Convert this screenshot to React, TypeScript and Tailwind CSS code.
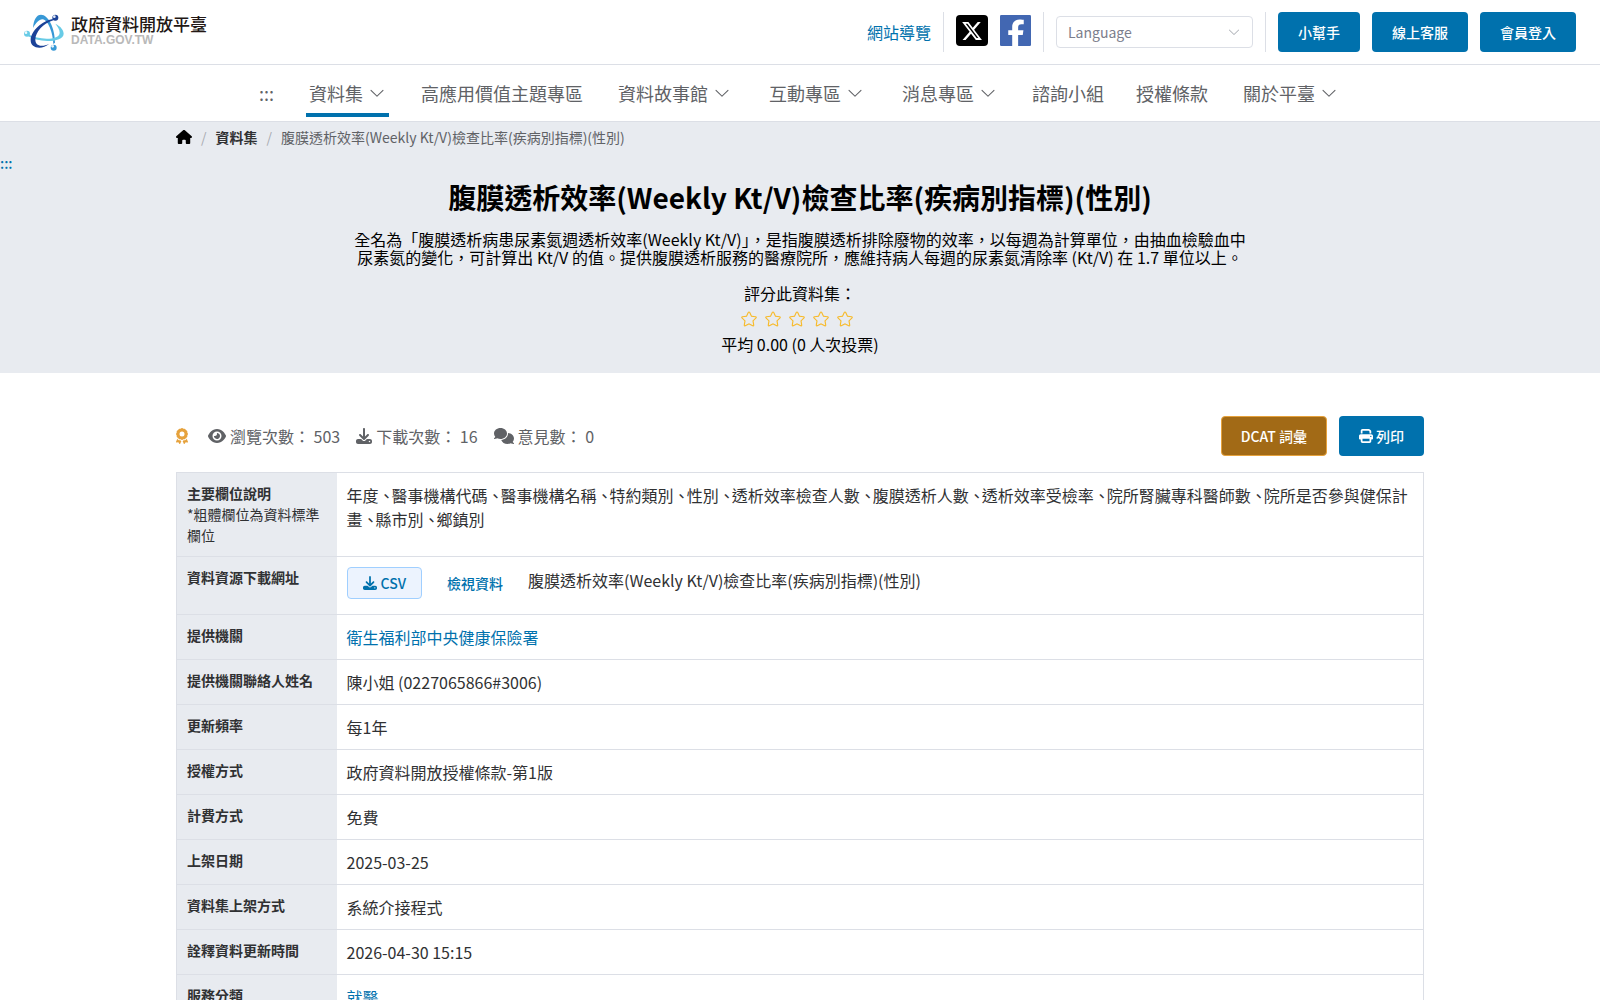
import React from "react";
import { FaAward, FaComments, FaDownload, FaEye, FaHouse, FaPrint, FaXTwitter } from "react-icons/fa6";

const DATASET = "腹膜透析效率(Weekly Kt/V)檢查比率(疾病別指標)(性別)";

const NAV = [
  { label: "資料集", menu: true, active: true },
  { label: "高應用價值主題專區" },
  { label: "資料故事館", menu: true },
  { label: "互動專區", menu: true },
  { label: "消息專區", menu: true },
  { label: "諮詢小組" },
  { label: "授權條款" },
  { label: "關於平臺", menu: true },
];

const FIELDS = [
  "年度",
  "醫事機構代碼",
  "醫事機構名稱",
  "特約類別",
  "性別",
  "透析效率檢查人數",
  "腹膜透析人數",
  "透析效率受檢率",
  "院所腎臟專科醫師數",
  "院所是否參與健保計畫",
  "縣市別",
  "鄉鎮別",
];

const ROWS = [
  { label: "提供機關", value: "衛生福利部中央健康保險署", link: true },
  { label: "提供機關聯絡人姓名", value: "陳小姐 (0227065866#3006)" },
  { label: "更新頻率", value: "每1年" },
  { label: "授權方式", value: "政府資料開放授權條款-第1版" },
  { label: "計費方式", value: "免費" },
  { label: "上架日期", value: "2025-03-25" },
  { label: "資料集上架方式", value: "系統介接程式" },
  { label: "詮釋資料更新時間", value: "2026-04-30 15:15" },
  { label: "服務分類", value: "就醫", link: true },
];

function Chevron({ className }: { className?: string }) {
  return (
    <svg viewBox="0 0 1024 1024" fill="currentColor" aria-hidden="true" className={className}>
      <path d="M831.872 340.864 512 652.672 192.128 340.864a30.592 30.592 0 0 0-42.752 0 29.12 29.12 0 0 0 0 41.6L489.664 714.24a32 32 0 0 0 44.672 0l340.288-331.712a29.12 29.12 0 0 0 0-41.728 30.592 30.592 0 0 0-42.752 0z" />
    </svg>
  );
}

function Star() {
  return (
    <svg viewBox="0 0 1024 1024" fill="currentColor" aria-hidden="true" className="size-[18px]">
      <path d="M512 747.84l228.16 119.936a6.4 6.4 0 0 0 9.28-6.72l-43.52-254.08 184.512-179.904a6.4 6.4 0 0 0-3.52-10.88l-255.104-37.12L517.76 147.904a6.4 6.4 0 0 0-11.52 0L392.192 379.072l-255.104 37.12a6.4 6.4 0 0 0-3.52 10.88L318.08 606.976l-43.584 254.08a6.4 6.4 0 0 0 9.28 6.72L512 747.84zM313.6 924.48a70.4 70.4 0 0 1-102.144-74.24l37.888-220.928L88.96 472.96A70.4 70.4 0 0 1 128 352.896l221.76-32.256 99.2-200.96a70.4 70.4 0 0 1 126.208 0l99.2 200.96 221.824 32.256a70.4 70.4 0 0 1 39.04 120.064L774.72 629.376l37.888 220.928a70.4 70.4 0 0 1-102.144 74.24L512 820.096l-198.4 104.32z" />
    </svg>
  );
}

function Logo() {
  return (
    <svg viewBox="0 0 120 111" aria-hidden="true" className="h-[37px] w-10">
      <path d="M27 42C29 16 38 2 51 2c21 0 42 38 42 84l-5 4C87 56 72 18 56 16 46 15 36 26 27 42Z" fill="#3798d6" />
      <path d="M94 29c16 8 25 19 25 30 0 15-22 22-49 22C48 81 25 75 8 64l2-4c18 9 38 14 58 14 22 0 39-6 39-18 0-9-6-18-13-27Z" fill="#68cbe6" />
      <path d="M86 15C56 20 20 50 20 79c0 15 11 22 26 22 10 0 20-4 30-12-9 4-15 6-23 6-12 0-19-7-19-18 0-22 23-49 54-58Z" fill="#1b4298" />
      <circle cx="94" cy="11" r="9" fill="#1b4298" />
      <circle cx="91" cy="8" r="4" fill="#e6edf8" />
      <circle cx="9" cy="59" r="9" fill="#68cbe6" />
      <circle cx="6" cy="56" r="4" fill="#effafd" />
      <circle cx="89" cy="101" r="9" fill="#3798d6" />
      <circle cx="86" cy="97" r="4" fill="#e6f3fb" />
    </svg>
  );
}

function Divider() {
  return <span className="h-10 w-px bg-[#dcdfe6]" />;
}

const primary = "flex h-10 items-center gap-[3px] rounded bg-[#0071ad] px-5 text-sm font-medium text-white";
const thClass = "w-40 bg-[#e8ebf0] p-2.5 text-left align-top text-sm leading-[21px] font-bold text-[#303133]";
const tdClass = "p-2.5 align-top text-base leading-6 text-[#303133]";

export default function App() {
  return (
    <div className="bg-white font-['Noto_Sans_CJK_TC',sans-serif] text-base text-black" lang="zh-Hant">
      <header>
        <div className="flex h-[65px] items-center justify-between border-b border-[#dcdfe6] px-6">
          <a href="#" className="flex items-center gap-[7px]">
            <Logo />
            <span className="flex flex-col pb-[5px]">
              <span className="text-[17px] leading-5 font-medium text-[#231815]">政府資料開放平臺</span>
              <span className="font-['Liberation_Sans',sans-serif] text-xs leading-3 font-bold text-[#b9b9b9]">DATA.GOV.TW</span>
            </span>
          </a>
          <div className="flex items-center gap-3">
            <a href="#" className="text-[#0071ad]">網站導覽</a>
            <Divider />
            <div className="flex items-center gap-3 pb-[3px]">
              <a href="#" aria-label="X" className="flex h-[31px] w-8 items-center justify-center rounded bg-black text-white">
                <FaXTwitter className="size-[22px]" />
              </a>
              <a href="#" aria-label="Facebook">
                <svg viewBox="0 0 94 96" preserveAspectRatio="none" aria-hidden="true" className="size-[31px]">
                  <rect width="94" height="96" rx="4" fill="#4267b2" />
                  <path d="M37 96V62H25V47H37V37C37 22 46 14 59 14C65 14 71 15 72 15V29H65C58 29 55 33 55 38V47H71L69 62H55V96Z" fill="#fff" />
                </svg>
              </a>
            </div>
            <Divider />
            <div className="relative">
              <select aria-label="Language" defaultValue="" className="h-8 w-[197px] appearance-none rounded border border-[#dcdfe6] bg-white px-[11px] text-sm text-[#7c7e8c]">
                <option value="">Language</option>
              </select>
              <Chevron className="pointer-events-none absolute top-[9px] right-3 size-[14px] text-[#a8abb2]" />
            </div>
            <Divider />
            <button className={primary}>小幫手</button>
            <button className={primary}>線上客服</button>
            <button className={primary}>會員登入</button>
          </div>
        </div>
        <nav className="flex h-[57px] items-center justify-center gap-8 border-b border-[#dcdfe6] text-lg text-[#606266]">
          <a href="#">:::</a>
          {NAV.map((n) =>
            n.menu ? (
              <button
                key={n.label}
                className={
                  n.active
                    ? "flex h-12 items-center gap-[5px] border-y-4 border-t-transparent border-b-[#0071ad] px-[3px]"
                    : "flex h-12 items-center gap-[5px] px-[3px]"
                }
              >
                {n.label}
                <Chevron className="size-[18px]" />
              </button>
            ) : (
              <a key={n.label} href="#">{n.label}</a>
            )
          )}
        </nav>
      </header>

      <section className="bg-[#e8ebf0] pt-[5px] pb-[17px]">
        <div className="mx-auto flex max-w-[1248px] items-center text-sm leading-5">
          <a href="#" aria-label="首頁">
            <FaHouse className="size-4" />
          </a>
          <span className="mx-[9px] text-[#a8abb2]">/</span>
          <a href="#" className="font-bold text-[#303133]">資料集</a>
          <span className="mx-[9px] text-[#a8abb2]">/</span>
          <span className="text-[#606266]">{DATASET}</span>
        </div>
        <a href="#" className="mt-1.5 block w-4 text-sm leading-5 font-medium text-[#0071ad]">:::</a>
        <div className="mx-auto max-w-[900px] text-center">
          <h1 className="mt-[3px] text-[28px] leading-[42px] font-bold">{DATASET}</h1>
          <p className="mt-3 leading-[18px]">
            全名為「腹膜透析病患尿素氮週透析效率(Weekly Kt/V)」，是指腹膜透析排除廢物的效率，以每週為計算單位，由抽血檢驗血中尿素氮的變化，可計算出 Kt/V 的值。提供腹膜透析服務的醫療院所，應維持病人每週的尿素氮清除率 (Kt/V) 在 1.7 單位以上。
          </p>
          <p className="mt-[15px] leading-6">評分此資料集：</p>
          <div role="img" aria-label="0 / 5" className="flex h-[27px] items-center justify-center gap-1.5 pr-1.5 text-[#f7ba2a]">
            <Star />
            <Star />
            <Star />
            <Star />
            <Star />
          </div>
          <p className="leading-6">平均 0.00 (0 人次投票)</p>
        </div>
      </section>

      <main className="mx-auto mt-[43px] max-w-[1248px]">
        <div className="flex items-center justify-between">
          <div className="flex items-center gap-4 text-[#606266]">
            <FaAward className="mr-1 h-4 w-3 text-[#e6a23c]" />
            <span className="flex items-center gap-1">
              <FaEye className="h-4 w-[18px]" />
              瀏覽次數： 503
            </span>
            <span className="flex items-center gap-1">
              <FaDownload className="size-4" />
              下載次數： 16
            </span>
            <span className="flex items-center gap-1">
              <FaComments className="h-4 w-5" />
              意見數： 0
            </span>
          </div>
          <div className="flex gap-3">
            <button className="h-10 rounded border border-[#e6a23c] bg-[#a26a16] px-[19px] text-sm font-medium text-white">DCAT 詞彙</button>
            <button className={primary}>
              <FaPrint className="size-[14px]" />
              列印
            </button>
          </div>
        </div>

        <table className="mt-4 w-full border-collapse border border-[#dcdfe6]">
          <tbody>
            <tr className="border-b border-[#dcdfe6]">
              <th scope="row" className={thClass}>
                主要欄位說明
                <span className="block font-normal">*粗體欄位為資料標準欄位</span>
              </th>
              <td className={tdClass}>
                {FIELDS.map((f, i) => (
                  <React.Fragment key={f}>
                    {f}
                    {i < FIELDS.length - 1 && <span className="mr-[-3px]">、</span>}
                  </React.Fragment>
                ))}
              </td>
            </tr>
            <tr className="border-b border-[#dcdfe6]">
              <th scope="row" className={thClass}>資料資源下載網址</th>
              <td className={tdClass}>
                <div className="flex h-[37px] items-start gap-[25px]">
                  <button className="flex h-8 items-center gap-1 rounded border border-[#a0cfff] bg-[#ecf3fe] px-[15px] text-sm font-medium text-[#0071ad]">
                    <FaDownload className="size-[14px]" />
                    CSV
                  </button>
                  <button className="h-8 text-sm font-medium text-[#0071ad]">檢視資料</button>
                  <span className="leading-[27px]">{DATASET}</span>
                </div>
              </td>
            </tr>
            {ROWS.map((r) => (
              <tr key={r.label} className="border-b border-[#dcdfe6]">
                <th scope="row" className={thClass}>{r.label}</th>
                <td className={tdClass}>{r.link ? <a href="#" className="text-[#0071ad]">{r.value}</a> : r.value}</td>
              </tr>
            ))}
          </tbody>
        </table>
      </main>
    </div>
  );
}
